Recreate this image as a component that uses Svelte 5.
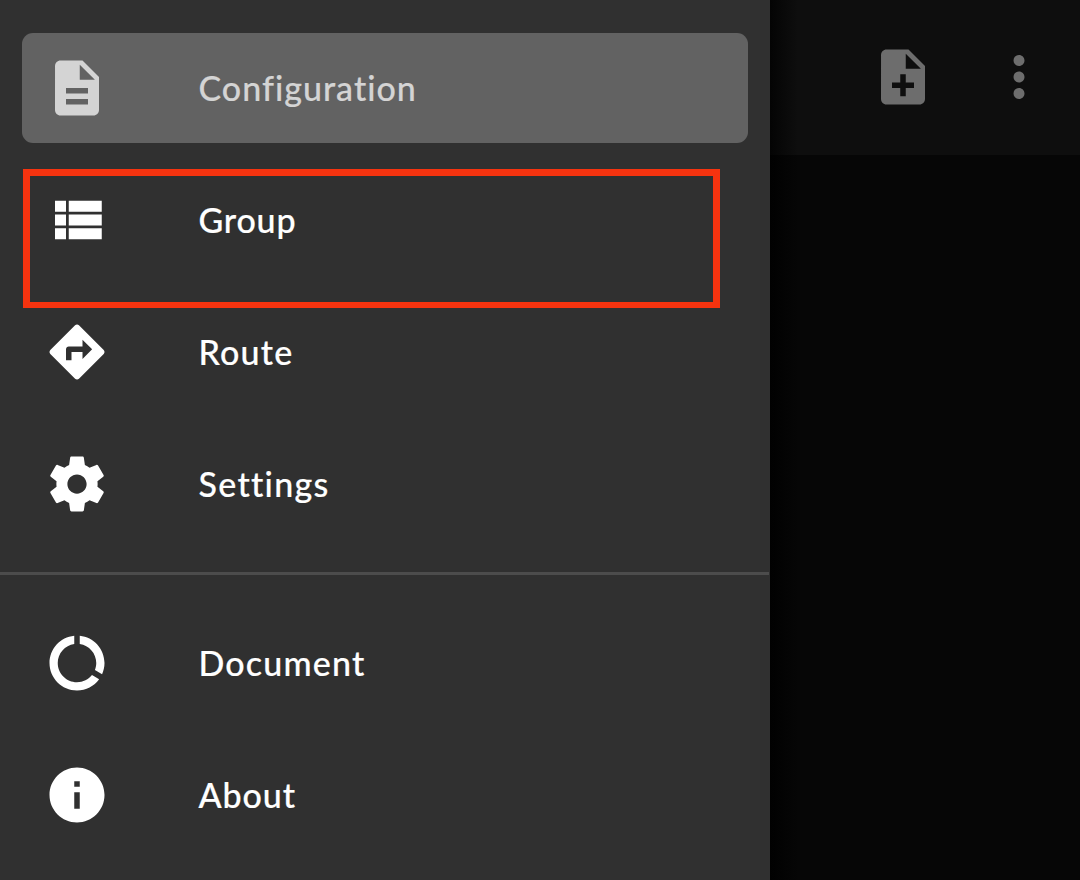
<script>
  const page = 'M14 2H6c-1.1 0-1.99.9-1.99 2L4 20c0 1.1.89 2 1.99 2H18c1.1 0 2-.9 2-2V8l-6-6z';
  const main = [
    { label: 'Configuration', spacing: 1.0, active: true, icon: page + 'm2 16H8v-2h8v2zm0-4H8v-2h8v2zm-3-5V3.5L18.5 9H13z' },
    { label: 'Group', spacing: 0.8, marked: true, icon: 'M4 14h4v-4H4v4zm0 5h4v-4H4v4zM4 9h4V5H4v4zm5 5h12v-4H9v4zm0 5h12v-4H9v4zM9 5v4h12V5H9z' },
    { label: 'Route', spacing: 1.2, icon: 'M21.71 11.29l-9-9c-.39-.39-1.02-.39-1.41 0l-9 9c-.39.39-.39 1.02 0 1.41l9 9c.39.39 1.02.39 1.41 0l9-9c.39-.38.39-1.01 0-1.41zM14 14.5V12h-4v3H8v-4c0-.55.45-1 1-1h5V7.5l3.5 3.5-3.5 3.5z' },
    { label: 'Settings', spacing: 1.3, icon: 'M19.43 12.98c.04-.32.07-.64.07-.98s-.03-.66-.07-.98l2.11-1.65c.19-.15.24-.42.12-.64l-2-3.46c-.12-.22-.39-.3-.61-.22l-2.49 1c-.52-.4-1.08-.73-1.69-.98l-.38-2.65C14.46 2.18 14.25 2 14 2h-4c-.25 0-.46.18-.49.42l-.38 2.65c-.61.25-1.17.59-1.69.98l-2.49-1c-.23-.09-.49 0-.61.22l-2 3.46c-.13.22-.07.49.12.64l2.11 1.65c-.04.32-.07.65-.07.98s.03.66.07.98l-2.11 1.65c-.19.15-.24.42-.12.64l2 3.46c.12.22.39.3.61.22l2.49-1c.52.4 1.08.73 1.69.98l.38 2.65c.03.24.24.42.49.42h4c.25 0 .46-.18.49-.42l.38-2.65c.61-.25 1.17-.59 1.69-.98l2.49 1c.23.09.49 0 .61-.22l2-3.46c.12-.22.07-.49-.12-.64l-2.11-1.65zM12 15.5c-1.93 0-3.5-1.57-3.5-3.5s1.57-3.5 3.5-3.5 3.5 1.57 3.5 3.5-1.57 3.5-3.5 3.5z' }
  ];
  const extra = [
    { label: 'Document', spacing: 1.2, icon: 'M13 2.05v3.03c3.39.49 6 3.39 6 6.92 0 .9-.18 1.75-.48 2.54l2.6 1.53c.56-1.24.88-2.62.88-4.07 0-5.18-3.95-9.45-9-9.95zM12 19c-3.87 0-7-3.13-7-7 0-3.53 2.61-6.43 6-6.92V2.05c-5.06.5-9 4.76-9 9.95 0 5.52 4.47 10 9.99 10 3.31 0 6.24-1.61 8.06-4.09l-2.6-1.53C16.17 17.98 14.21 19 12 19z' },
    { label: 'About', spacing: 0.9, icon: 'M12 2C6.48 2 2 6.48 2 12s4.48 10 10 10 10-4.48 10-10S17.52 2 12 2zm1 15h-2v-6h2v6zm0-8h-2V7h2v2z' }
  ];
</script>

{#snippet entry(item)}
  <li class="item" class:active={item.active} class:marked={item.marked}>
    <svg class="icon" viewBox="0 0 24 24"><path d={item.icon} /></svg>
    <span class="label" style="letter-spacing: {item.spacing}px">{item.label}</span>
  </li>
{/snippet}

<div class="screen">
  <nav class="drawer">
    <ul class="list">
      {#each main as item}{@render entry(item)}{/each}
    </ul>
    <div class="divider"></div>
    <ul class="list second">
      {#each extra as item}{@render entry(item)}{/each}
    </ul>
  </nav>
  <main class="content">
    <header class="bar">
      <svg class="icon" viewBox="0 0 24 24"><path d="{page}m2 14h-3v3h-2v-3H8v-2h3v-3h2v3h3v2zm-3-7V3.5L18.5 9H13z" /></svg>
      <svg class="icon" viewBox="0 0 24 24"><path d="M12 8c1.1 0 2-.9 2-2s-.9-2-2-2-2 .9-2 2 .9 2 2 2zm0 2c-1.1 0-2 .9-2 2s.9 2 2 2 2-.9 2-2-.9-2-2-2zm0 6c-1.1 0-2 .9-2 2s.9 2 2 2 2-.9 2-2-.9-2-2-2z" /></svg>
    </header>
  </main>
</div>

<style>
  :global(body) { margin: 0; background: #050505; }
  .screen {
    display: flex;
    width: 1080px;
    height: 880px;
    overflow: hidden;
    font-family: Lato, "Noto Sans", sans-serif;
  }
  .drawer {
    box-sizing: border-box;
    width: 770px;
    padding-top: 33px;
    background: #303030;
    color: #fff;
  }
  .list {
    display: flex;
    flex-direction: column;
    gap: 22px;
    margin: 0;
    padding: 0 22px;
    list-style: none;
  }
  .item {
    position: relative;
    display: flex;
    align-items: center;
    box-sizing: border-box;
    width: 726px;
    height: 110px;
    padding-left: 22px;
    border-radius: 11px;
  }
  .active { background: #626262; color: #d4d4d4; }
  .marked::after {
    content: "";
    position: absolute;
    left: 1px;
    top: 4px;
    box-sizing: border-box;
    width: 697px;
    height: 139px;
    border: 7px solid #f5330f;
    border-bottom-width: 6px;
  }
  .icon {
    display: block;
    flex: none;
    width: 66px;
    height: 66px;
    fill: currentColor;
  }
  .label {
    margin-left: 88.5px;
    font-size: 34px;
    font-weight: 500;
    line-height: 44px;
    white-space: nowrap;
    -webkit-text-stroke: 0.2px currentColor;
  }
  .divider {
    width: 769px;
    height: 3px;
    margin-top: 33px;
    background: #4c4c4c;
  }
  .second { margin-top: 33px; }
  .content {
    flex: 1;
    background: linear-gradient(90deg, #010101, #060606 28px);
  }
  .bar {
    display: flex;
    align-items: center;
    gap: 50px;
    box-sizing: border-box;
    height: 155px;
    padding: 0 0 1px 100px;
    background: linear-gradient(90deg, #040404, #0e0e0e 28px);
    color: #6d6d6d;
  }
</style>
